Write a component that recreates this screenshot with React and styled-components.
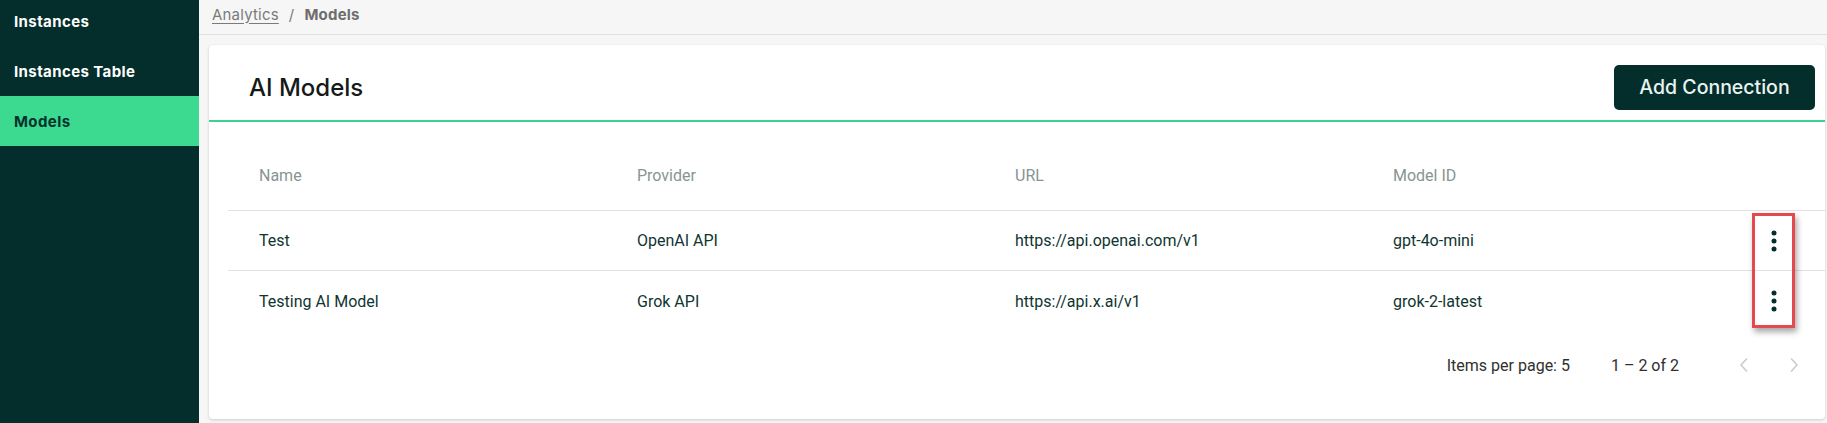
import React from "react";
import styled, { createGlobalStyle } from "styled-components";

const GlobalStyle = createGlobalStyle`
  html, body { margin: 0; padding: 0; }
  body { font-family: Inter, "Noto Sans", sans-serif; background: #f6f6f6; }
  * { box-sizing: border-box; }
`;

const Shell = styled.div`
  display: flex;
  height: 100vh;
  overflow: hidden;
`;

const Sidebar = styled.nav`
  width: 199px;
  flex-shrink: 0;
  background: #032e2b;
  display: flex;
  flex-direction: column;
  margin-top: -4px;
`;

const NavItem = styled.div`
  height: 50px;
  display: flex;
  align-items: center;
  padding-left: 14px;
  font-size: 15px;
  font-weight: 700;
  letter-spacing: 0.4px;
  color: ${(p) => (p.$active ? "#04332e" : "#ffffff")};
  background: ${(p) => (p.$active ? "#3cda90" : "transparent")};
`;

const Main = styled.main`
  flex: 1;
  display: flex;
  flex-direction: column;
  background: #f6f6f6;
  min-width: 0;
`;

const Breadcrumbs = styled.div`
  height: 35px;
  flex-shrink: 0;
  display: flex;
  align-items: center;
  gap: 10px;
  padding: 0 0 6px 13px;
  border-bottom: 1px solid #e0e0e0;
  font-size: 15px;
  letter-spacing: 0.2px;
`;

const Crumb = styled.span`
  text-decoration: ${(p) => (p.$link ? "underline" : "none")};
  text-underline-offset: 3px;
  font-weight: ${(p) => (p.$current ? 700 : 400)};
  color: ${(p) => (p.$current ? "#6e6e6e" : "#7b7b7b")};
`;

const Content = styled.div`
  flex: 1;
  display: flex;
  padding: 10px 2px 4px 10px;
  min-height: 0;
`;

const Card = styled.section`
  flex: 1;
  background: #ffffff;
  border-radius: 4px;
  box-shadow: 0 1px 3px rgba(0, 0, 0, 0.18);
  display: flex;
  flex-direction: column;
`;

const CardHeader = styled.header`
  height: 77px;
  display: flex;
  align-items: center;
  justify-content: space-between;
  padding: 9px 10px 0 40px;
  border-bottom: 2px solid #3dd38d;
`;

const Title = styled.h1`
  margin: 0;
  font-size: 24px;
  font-weight: 500;
  color: #151a19;
`;

const PrimaryButton = styled.button`
  width: 201px;
  height: 45px;
  border: none;
  border-radius: 5px;
  background: #032e2b;
  color: #eaf3f0;
  font-family: Inter, "Noto Sans", sans-serif;
  font-size: 19.5px;
  font-weight: 500;
  cursor: pointer;
`;

const TableArea = styled.div`
  position: relative;
  margin: 19px 0 0 19px;
  font-family: Roboto, "Noto Sans", sans-serif;
`;

const Row = styled.div`
  display: grid;
  grid-template-columns: repeat(4, 378px) 1fr;
  height: ${(p) => (p.$head ? "70px" : "60px")};
  align-items: center;
  border-bottom: ${(p) => (p.$last ? "none" : "1px solid #e2e2e2")};
`;

const Cell = styled.div`
  padding-left: 31px;
  font-size: 16px;
  color: ${(p) => (p.$head ? "#879592" : "#0f3531")};
`;

const ActionCell = styled.div`
  padding-left: 26px;
  display: flex;
  align-items: center;
`;

const KebabButton = styled.button`
  width: 16px;
  height: 30px;
  padding: 0;
  border: none;
  background: transparent;
  display: flex;
  align-items: center;
  justify-content: center;
  cursor: pointer;
`;

const Highlight = styled.div`
  position: absolute;
  left: 1524px;
  top: 72px;
  width: 43px;
  height: 115px;
  border: 3px solid #e5484d;
  box-shadow: 2px 4px 6px rgba(0, 0, 0, 0.35);
  pointer-events: none;
`;

const Paginator = styled.div`
  display: flex;
  justify-content: flex-end;
  align-items: center;
  height: 56px;
  margin-top: 6px;
  padding-right: 11px;
  font-family: Roboto, "Noto Sans", sans-serif;
  font-size: 16px;
  color: #303030;
`;

const PageLabel = styled.span`
  margin-right: ${(p) => p.$gap}px;
`;

const PageButton = styled.button`
  width: 40px;
  height: 40px;
  border: none;
  background: transparent;
  display: flex;
  align-items: center;
  justify-content: center;
  margin-left: ${(p) => p.$gap || 0}px;
  padding: 0;
`;

const Kebab = () => (
  <svg width="16" height="30" viewBox="0 0 16 30" aria-hidden="true">
    <circle cx="8" cy="7" r="2.5" fill="#032e2b" />
    <circle cx="8" cy="15" r="2.5" fill="#032e2b" />
    <circle cx="8" cy="23" r="2.5" fill="#032e2b" />
  </svg>
);

const Chevron = ({ dir }) => (
  <svg width="12" height="16" viewBox="0 0 12 16" aria-hidden="true">
    <path
      d={dir === "left" ? "M8.5 2 L3 8 L8.5 14" : "M3.5 2 L9 8 L3.5 14"}
      fill="none"
      stroke="#cbcbcb"
      strokeWidth="1.6"
      strokeLinecap="round"
      strokeLinejoin="round"
    />
  </svg>
);

const models = [
  { name: "Test", provider: "OpenAI API", url: "https://api.openai.com/v1", id: "gpt-4o-mini" },
  { name: "Testing AI Model", provider: "Grok API", url: "https://api.x.ai/v1", id: "grok-2-latest" },
];

export default function App() {
  return (
    <>
      <GlobalStyle />
      <Shell>
        <Sidebar>
          <NavItem>Instances</NavItem>
          <NavItem>Instances Table</NavItem>
          <NavItem $active>Models</NavItem>
        </Sidebar>
        <Main>
          <Breadcrumbs>
            <Crumb $link>Analytics</Crumb>
            <Crumb>/</Crumb>
            <Crumb $current>Models</Crumb>
          </Breadcrumbs>
          <Content>
            <Card>
              <CardHeader>
                <Title>AI Models</Title>
                <PrimaryButton>Add Connection</PrimaryButton>
              </CardHeader>
              <TableArea>
                <Row $head>
                  <Cell $head>Name</Cell>
                  <Cell $head>Provider</Cell>
                  <Cell $head>URL</Cell>
                  <Cell $head>Model ID</Cell>
                  <div />
                </Row>
                {models.map((m, i) => (
                  <Row key={m.name} $last={i === models.length - 1}>
                    <Cell>{m.name}</Cell>
                    <Cell>{m.provider}</Cell>
                    <Cell>{m.url}</Cell>
                    <Cell>{m.id}</Cell>
                    <ActionCell>
                      <KebabButton aria-label="More actions">
                        <Kebab />
                      </KebabButton>
                    </ActionCell>
                  </Row>
                ))}
                <Highlight />
              </TableArea>
              <Paginator>
                <PageLabel $gap={41}>Items per page: 5</PageLabel>
                <PageLabel $gap={45}>1 – 2 of 2</PageLabel>
                <PageButton aria-label="Previous page">
                  <Chevron dir="left" />
                </PageButton>
                <PageButton $gap={10} aria-label="Next page">
                  <Chevron dir="right" />
                </PageButton>
              </Paginator>
            </Card>
          </Content>
        </Main>
      </Shell>
    </>
  );
}
